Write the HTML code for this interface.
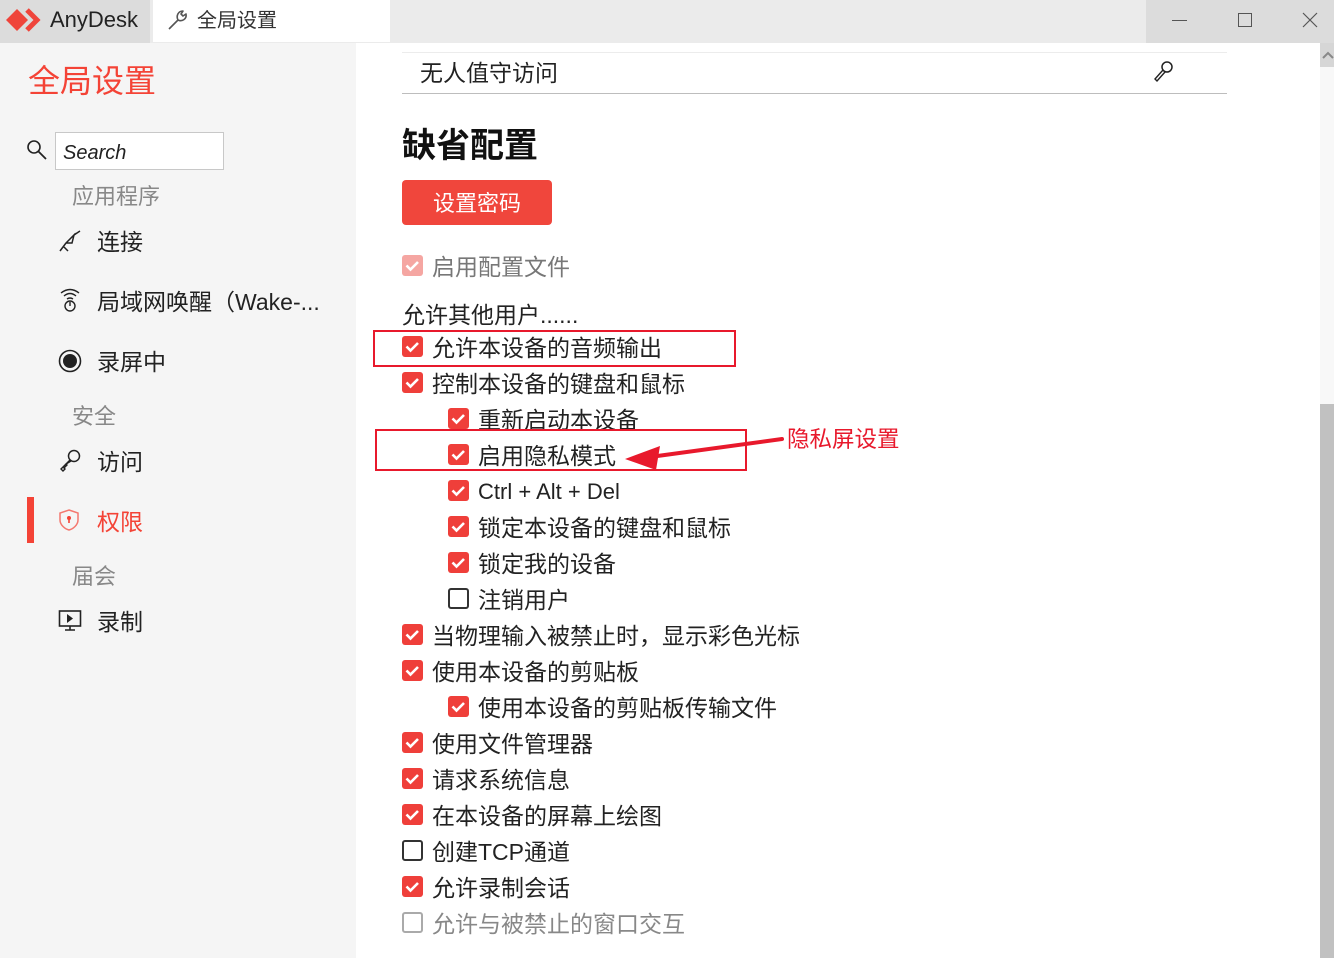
<!DOCTYPE html>
<html><head><meta charset="utf-8"><style>
*{margin:0;padding:0;box-sizing:border-box}
body{width:1334px;height:958px;overflow:hidden;position:relative;background:#fff;font-family:"Liberation Sans","Noto Sans CJK SC",sans-serif;color:#222}
.a{position:absolute;white-space:nowrap}
.t{font-size:23px;line-height:30px}
.cb{position:absolute;width:21px;height:21px;border-radius:3px;background:#ef3f3a}
.cb svg{position:absolute;left:0;top:0}
.ub{position:absolute;width:21px;height:21px;border-radius:3px;border:2px solid #333;background:#fff}
</style></head><body>
<div class="a" style="left:0;top:0;width:1334px;height:43px;background:#ebebeb"></div>
<div class="a" style="left:0;top:0;width:150px;height:43px;background:#dcdcdc"></div>
<div class="a" style="left:1146px;top:0;width:188px;height:43px;background:#dcdcdc"></div>
<div class="a" style="left:153px;top:0;width:237px;height:42px;background:#fff"></div>
<svg class="a" style="left:5px;top:7px" width="38" height="26" viewBox="0 0 38 26"><path d="M1 13 L12 2 L23 13 L12 24Z" fill="#ef443b"/><path d="M22 3 L32 13 L22 23" fill="none" stroke="#ef443b" stroke-width="5"/></svg>
<div class="a" style="left:50px;top:5px;font-size:22px;line-height:30px;color:#222">AnyDesk</div>
<svg class="a" style="left:166px;top:8px" width="24" height="24" viewBox="0 0 24 24"><path d="M3 21 L12 12 M12 12 C10 8 12 3 17 3 L15 6 L17 8 L20 6 C21 11 16 14 12 12" fill="none" stroke="#555" stroke-width="1.6" stroke-linejoin="round"/></svg>
<div class="a" style="left:197px;top:6px;font-size:20px;line-height:30px;color:#333">全局设置</div>
<div class="a" style="left:1172px;top:20px;width:15px;height:1px;background:#555"></div>
<div class="a" style="left:1238px;top:13px;width:14px;height:14px;border:1px solid #555"></div>
<svg class="a" style="left:1302px;top:12px" width="16" height="16"><path d="M1 1L15 15M15 1L1 15" stroke="#555" stroke-width="1.2"/></svg>
<div class="a" style="left:0;top:43px;width:356px;height:915px;background:#f5f5f5"></div>
<div class="a" style="left:28px;top:59px;font-size:32px;line-height:44px;color:#f44336">全局设置</div>
<svg class="a" style="left:26px;top:139px" width="22" height="22"><circle cx="8" cy="8" r="6" fill="none" stroke="#222" stroke-width="1.6"/><path d="M12.5 12.5L20 20" stroke="#222" stroke-width="1.8"/></svg>
<div class="a" style="left:55px;top:132px;width:169px;height:38px;background:#fff;border:1px solid #c8c8c8"></div>
<div class="a" style="left:63px;top:138px;font-size:20px;line-height:30px;font-style:italic;color:#222">Search</div>
<div class="a" style="left:72px;top:182px;font-size:22px;line-height:30px;color:#888">应用程序</div>
<div class="a" style="left:72px;top:402px;font-size:22px;line-height:30px;color:#888">安全</div>
<div class="a" style="left:72px;top:562px;font-size:22px;line-height:30px;color:#888">届会</div>
<div class="a t" style="left:97px;top:227px">连接</div>
<div class="a t" style="left:97px;top:287px">局域网唤醒（Wake-...</div>
<div class="a t" style="left:97px;top:347px">录屏中</div>
<div class="a t" style="left:97px;top:447px">访问</div>
<div class="a t" style="left:97px;top:507px;color:#f44336">权限</div>
<div class="a t" style="left:97px;top:607px">录制</div>
<svg class="a" style="left:58px;top:229px" width="24" height="24"><path d="M2 22L8 14M8 14L16 6L14 14L8 14M16 6L22 2M6 18L10 22" fill="none" stroke="#222" stroke-width="1.5"/></svg>
<svg class="a" style="left:58px;top:287px" width="24" height="26"><path d="M3 6Q12 -1 21 6M6 9Q12 4 18 9M9 12Q12 10 15 12" fill="none" stroke="#222" stroke-width="1.4"/><circle cx="12" cy="19" r="5" fill="none" stroke="#222" stroke-width="1.4"/><path d="M12 15V19" stroke="#222" stroke-width="1.4"/></svg>
<svg class="a" style="left:58px;top:349px" width="24" height="24"><circle cx="12" cy="12" r="10.5" fill="none" stroke="#222" stroke-width="1.6"/><circle cx="12" cy="12" r="7" fill="#222"/></svg>
<svg class="a" style="left:58px;top:448px" width="24" height="24"><circle cx="16" cy="8" r="5.5" fill="none" stroke="#222" stroke-width="1.5"/><path d="M12 12L3 21L5 23L7 21L6 20L9 17L8 16L13 13" fill="none" stroke="#222" stroke-width="1.4"/></svg>
<div class="a" style="left:27px;top:497px;width:7px;height:46px;background:#f44336"></div>
<svg class="a" style="left:58px;top:508px" width="22" height="24"><path d="M11 2L20 5V12C20 17 15 21 11 22C7 21 2 17 2 12V5Z" fill="none" stroke="#f44336" stroke-width="1.5" opacity=".7"/><circle cx="11" cy="10" r="2" fill="#f44336"/><path d="M11 11V15" stroke="#f44336" stroke-width="1.6"/></svg>
<svg class="a" style="left:58px;top:609px" width="24" height="24"><rect x="1.5" y="2" width="21" height="15" fill="none" stroke="#222" stroke-width="1.6"/><path d="M9 5L15 9.5L9 14Z" fill="#222"/><path d="M12 17V21M7 21H17" stroke="#222" stroke-width="1.6"/></svg>
<div class="a" style="left:1320px;top:43px;width:14px;height:915px;background:#f8f8f8"></div>
<div class="a" style="left:1320px;top:404px;width:14px;height:554px;background:#c1c1c1"></div>
<div class="a" style="left:1320px;top:43px;width:14px;height:24px;background:#d6d6d6"></div>
<svg class="a" style="left:1322px;top:50px" width="12" height="10"><path d="M1 8L6 3L11 8" fill="none" stroke="#888" stroke-width="2"/></svg>
<div class="a" style="left:402px;top:52px;width:825px;height:1px;background:#ececec"></div>
<div class="a t" style="left:420px;top:58px">无人值守访问</div>
<svg class="a" style="left:1151px;top:60px" width="24" height="22"><circle cx="16" cy="7" r="5" fill="none" stroke="#222" stroke-width="1.5"/><path d="M12 10L4 19L6 21L14 12" fill="none" stroke="#222" stroke-width="1.4"/></svg>
<div class="a" style="left:402px;top:93px;width:825px;height:1px;background:#bdbdbd"></div>
<div class="a" style="left:402px;top:124px;font-size:34px;line-height:44px;font-weight:bold;color:#111">缺省配置</div>
<div class="a" style="left:402px;top:180px;width:150px;height:45px;background:#f0463c;border-radius:4px;color:#fff;font-size:22px;line-height:47px;text-align:center">设置密码</div>
<div class="cb" style="left:402px;top:255px;background:#f5a6a2"><svg width="21" height="21"><path d="M4.5 10.5L8.5 14.5L16 7" fill="none" stroke="#fff" stroke-width="2.6"/></svg></div>
<div class="a t" style="left:432px;top:252px;color:#777">启用配置文件</div>
<div class="a t" style="left:402px;top:300px">允许其他用户......</div>

<div class="cb" style="left:402px;top:336px"><svg width="21" height="21"><path d="M4.5 10.5L8.5 14.5L16 7" fill="none" stroke="#fff" stroke-width="2.6"/></svg></div><div class="a t" style="left:432px;top:333px">允许本设备的音频输出</div>
<div class="cb" style="left:402px;top:372px"><svg width="21" height="21"><path d="M4.5 10.5L8.5 14.5L16 7" fill="none" stroke="#fff" stroke-width="2.6"/></svg></div><div class="a t" style="left:432px;top:369px">控制本设备的键盘和鼠标</div>
<div class="cb" style="left:448px;top:408px"><svg width="21" height="21"><path d="M4.5 10.5L8.5 14.5L16 7" fill="none" stroke="#fff" stroke-width="2.6"/></svg></div><div class="a t" style="left:478px;top:405px">重新启动本设备</div>
<div class="cb" style="left:448px;top:444px"><svg width="21" height="21"><path d="M4.5 10.5L8.5 14.5L16 7" fill="none" stroke="#fff" stroke-width="2.6"/></svg></div><div class="a t" style="left:478px;top:441px">启用隐私模式</div>
<div class="cb" style="left:448px;top:480px"><svg width="21" height="21"><path d="M4.5 10.5L8.5 14.5L16 7" fill="none" stroke="#fff" stroke-width="2.6"/></svg></div><div class="a t" style="left:478px;top:477px;font-size:22px">Ctrl + Alt + Del</div>
<div class="cb" style="left:448px;top:516px"><svg width="21" height="21"><path d="M4.5 10.5L8.5 14.5L16 7" fill="none" stroke="#fff" stroke-width="2.6"/></svg></div><div class="a t" style="left:478px;top:513px">锁定本设备的键盘和鼠标</div>
<div class="cb" style="left:448px;top:552px"><svg width="21" height="21"><path d="M4.5 10.5L8.5 14.5L16 7" fill="none" stroke="#fff" stroke-width="2.6"/></svg></div><div class="a t" style="left:478px;top:549px">锁定我的设备</div>
<div class="ub" style="left:448px;top:588px"></div><div class="a t" style="left:478px;top:585px">注销用户</div>
<div class="cb" style="left:402px;top:624px"><svg width="21" height="21"><path d="M4.5 10.5L8.5 14.5L16 7" fill="none" stroke="#fff" stroke-width="2.6"/></svg></div><div class="a t" style="left:432px;top:621px">当物理输入被禁止时，显示彩色光标</div>
<div class="cb" style="left:402px;top:660px"><svg width="21" height="21"><path d="M4.5 10.5L8.5 14.5L16 7" fill="none" stroke="#fff" stroke-width="2.6"/></svg></div><div class="a t" style="left:432px;top:657px">使用本设备的剪贴板</div>
<div class="cb" style="left:448px;top:696px"><svg width="21" height="21"><path d="M4.5 10.5L8.5 14.5L16 7" fill="none" stroke="#fff" stroke-width="2.6"/></svg></div><div class="a t" style="left:478px;top:693px">使用本设备的剪贴板传输文件</div>
<div class="cb" style="left:402px;top:732px"><svg width="21" height="21"><path d="M4.5 10.5L8.5 14.5L16 7" fill="none" stroke="#fff" stroke-width="2.6"/></svg></div><div class="a t" style="left:432px;top:729px">使用文件管理器</div>
<div class="cb" style="left:402px;top:768px"><svg width="21" height="21"><path d="M4.5 10.5L8.5 14.5L16 7" fill="none" stroke="#fff" stroke-width="2.6"/></svg></div><div class="a t" style="left:432px;top:765px">请求系统信息</div>
<div class="cb" style="left:402px;top:804px"><svg width="21" height="21"><path d="M4.5 10.5L8.5 14.5L16 7" fill="none" stroke="#fff" stroke-width="2.6"/></svg></div><div class="a t" style="left:432px;top:801px">在本设备的屏幕上绘图</div>
<div class="ub" style="left:402px;top:840px"></div><div class="a t" style="left:432px;top:837px">创建TCP通道</div>
<div class="cb" style="left:402px;top:876px"><svg width="21" height="21"><path d="M4.5 10.5L8.5 14.5L16 7" fill="none" stroke="#fff" stroke-width="2.6"/></svg></div><div class="a t" style="left:432px;top:873px">允许录制会话</div>
<div class="ub" style="left:402px;top:912px;border-color:#aaa"></div><div class="a t" style="left:432px;top:909px;color:#888">允许与被禁止的窗口交互</div>

<div class="a" style="left:373px;top:330px;width:363px;height:37px;border:2px solid #e8192c"></div>
<div class="a" style="left:375px;top:429px;width:372px;height:42px;border:2px solid #e8192c"></div>
<svg class="a" style="left:620px;top:430px" width="170" height="40"><path d="M162 9L30 27" stroke="#e8192c" stroke-width="4" stroke-linecap="round"/><path d="M5 29L40 16L36 40Z" fill="#e8192c"/></svg>
<div class="a" style="left:787px;top:425px;font-size:22.5px;line-height:30px;color:#e8192c">隐私屏设置</div>
</body></html>
